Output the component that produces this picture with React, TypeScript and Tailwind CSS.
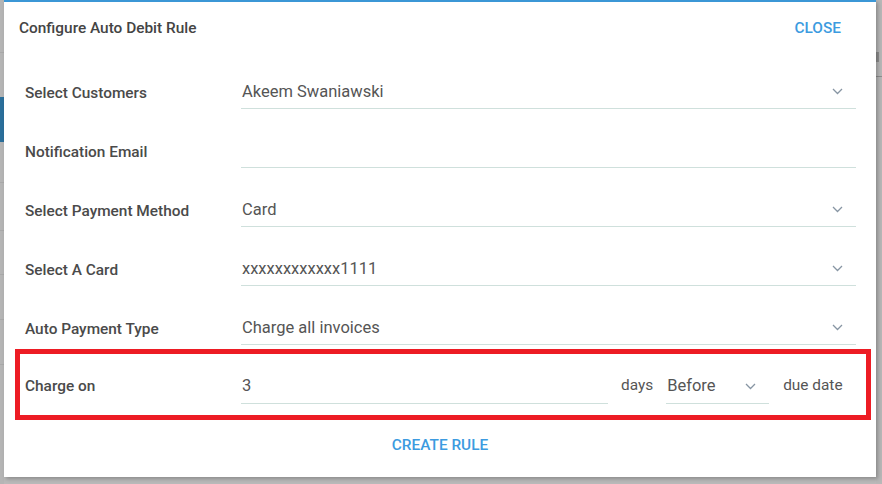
import React from "react";

const Chevron = () => (
  <svg width="11" height="7" viewBox="0 0 11 7" className="shrink-0">
    <polyline points="1,1 5.5,5.5 10,1" fill="none" stroke="#8795a3" strokeWidth="1.3" />
  </svg>
);

const Row = ({ label, value, select }: { label: string; value?: string; select?: boolean }) => (
  <div className="flex items-center h-[34px]">
    <div className="w-[237px] pl-[21px] text-[15.4px] font-medium text-[#4a4a4a] mt-[3px]">{label}</div>
    <div className="flex items-center h-[34px] w-[615px] border-b border-[#cfe0dc] pl-[1px] pr-[13px]">
      <span className="flex-1 text-[16.5px] text-[#555] mt-[1px]">{value}</span>
      {select && <Chevron />}
    </div>
  </div>
);

export default function App() {
  return (
    <div
      className="relative w-[882px] h-[484px] bg-[#bababa] flex overflow-hidden"
      style={{ fontFamily: "Roboto, 'Liberation Sans', sans-serif" }}
    >
      {/* left strip of the page behind */}
      <div className="w-[4px] h-full flex flex-col bg-[#b5b5b5]">
        <div className="h-[53px] border-b border-[#a9a9a9]" />
        <div className="h-[44px]" />
        <div className="h-[45px] bg-[#2b6f9b]" />
        <div className="h-[41px] border-b border-[#a9a9a9]" />
        <div className="h-[48px] border-b border-[#a9a9a9]" />
        <div className="h-[44px] border-b border-[#a9a9a9]" />
        <div className="h-[45px] border-b border-[#a9a9a9]" />
        <div className="h-[45px] border-b border-[#a9a9a9]" />
        <div className="flex-1" />
      </div>

      {/* dialog */}
      <div className="w-[872px] h-[477px] bg-white flex flex-col shadow-[2px_2px_4px_rgba(0,0,0,0.25)] z-10">
        <div className="h-[2px] bg-[#3b97d6]" />
        <div className="h-[50px] flex items-center justify-between pl-[15px] pr-[35px] pt-[4px]">
          <span className="text-[15.4px] font-medium text-[#444]">Configure Auto Debit Rule</span>
          <span className="text-[15.4px] font-medium text-[#3c9be0]">CLOSE</span>
        </div>
        <div className="flex flex-col gap-[25px] mt-[23px]">
          <Row label="Select Customers" value="Akeem Swaniawski" select />
          <Row label="Notification Email" value="" />
          <Row label="Select Payment Method" value="Card" select />
          <Row label="Select A Card" value="xxxxxxxxxxxx1111" select />
          <Row label="Auto Payment Type" value="Charge all invoices" select />
        </div>
        <div className="ml-[11px] mt-[4px] w-[856px] h-[71px] border-[5px] border-[#ed1c24] flex items-center">
          <div className="w-[221px] pl-[5px] text-[15.4px] font-medium text-[#4a4a4a] mt-[5px]">Charge on</div>
          <div className="mt-[4px] flex items-center h-[34px] w-[367px] border-b border-[#cfe0dc] pl-[1px]">
            <span className="text-[16.5px] text-[#555]">3</span>
          </div>
          <span className="ml-[13px] text-[15.4px] text-[#555] mt-[3px]">days</span>
          <div className="ml-[13px] mt-[4px] flex items-center h-[34px] w-[103px] border-b border-[#cfe0dc] pl-[1px] pr-[13px]">
            <span className="flex-1 text-[16.5px] text-[#555]">Before</span>
            <Chevron />
          </div>
          <span className="ml-[14px] text-[15.4px] text-[#555] mt-[3px]">due date</span>
        </div>
        <div className="mt-[14px] flex justify-center">
          <span className="text-[15.4px] font-medium text-[#3c9be0]">CREATE RULE</span>
        </div>
      </div>

      {/* right strip */}
      <div className="w-[6px] h-full flex flex-col bg-[#b8b8b8]">
        <div className="h-[77px] border-b border-[#8e8e8e] flex items-end pb-[14px] overflow-hidden">
          <div className="w-[3px] h-[10px] bg-[#8f8f8f] mt-auto" />
        </div>
      </div>
    </div>
  );
}
